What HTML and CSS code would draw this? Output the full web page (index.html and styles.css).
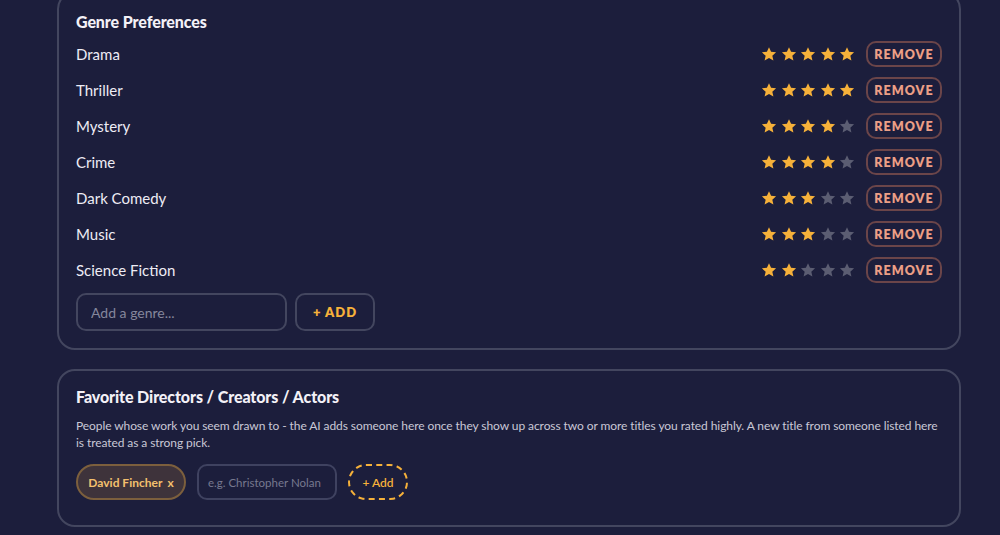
FILE: index.html
```html
<!DOCTYPE html>
<html lang="en">
<head>
<meta charset="utf-8">
<title>Preferences</title>
<link rel="stylesheet" href="styles.css">
</head>
<body>
<svg width="0" height="0" class="defs">
  <defs>
    <symbol id="star" viewBox="0 0 24 24">
      <path d="M12 1.8l3.1 6.9 7.5.8-5.6 5 1.6 7.4L12 18.1l-6.6 3.8L7 14.5l-5.6-5 7.5-.8z"/>
    </symbol>
  </defs>
</svg>
<main class="page">
  <section class="card genres">
    <h2 class="card-title">Genre Preferences</h2>
    <ul class="genre-list">
      <li class="genre-row"><span class="genre-name">Drama</span><span class="stars"><svg class="star on"><use href="#star"/></svg><svg class="star on"><use href="#star"/></svg><svg class="star on"><use href="#star"/></svg><svg class="star on"><use href="#star"/></svg><svg class="star on"><use href="#star"/></svg></span><button class="remove">REMOVE</button></li>
      <li class="genre-row"><span class="genre-name">Thriller</span><span class="stars"><svg class="star on"><use href="#star"/></svg><svg class="star on"><use href="#star"/></svg><svg class="star on"><use href="#star"/></svg><svg class="star on"><use href="#star"/></svg><svg class="star on"><use href="#star"/></svg></span><button class="remove">REMOVE</button></li>
      <li class="genre-row"><span class="genre-name">Mystery</span><span class="stars"><svg class="star on"><use href="#star"/></svg><svg class="star on"><use href="#star"/></svg><svg class="star on"><use href="#star"/></svg><svg class="star on"><use href="#star"/></svg><svg class="star"><use href="#star"/></svg></span><button class="remove">REMOVE</button></li>
      <li class="genre-row"><span class="genre-name">Crime</span><span class="stars"><svg class="star on"><use href="#star"/></svg><svg class="star on"><use href="#star"/></svg><svg class="star on"><use href="#star"/></svg><svg class="star on"><use href="#star"/></svg><svg class="star"><use href="#star"/></svg></span><button class="remove">REMOVE</button></li>
      <li class="genre-row"><span class="genre-name">Dark Comedy</span><span class="stars"><svg class="star on"><use href="#star"/></svg><svg class="star on"><use href="#star"/></svg><svg class="star on"><use href="#star"/></svg><svg class="star"><use href="#star"/></svg><svg class="star"><use href="#star"/></svg></span><button class="remove">REMOVE</button></li>
      <li class="genre-row"><span class="genre-name">Music</span><span class="stars"><svg class="star on"><use href="#star"/></svg><svg class="star on"><use href="#star"/></svg><svg class="star on"><use href="#star"/></svg><svg class="star"><use href="#star"/></svg><svg class="star"><use href="#star"/></svg></span><button class="remove">REMOVE</button></li>
      <li class="genre-row"><span class="genre-name">Science Fiction</span><span class="stars"><svg class="star on"><use href="#star"/></svg><svg class="star on"><use href="#star"/></svg><svg class="star"><use href="#star"/></svg><svg class="star"><use href="#star"/></svg><svg class="star"><use href="#star"/></svg></span><button class="remove">REMOVE</button></li>
    </ul>
    <div class="add-row">
      <input class="genre-input" type="text" placeholder="Add a genre...">
      <button class="add-btn">+ ADD</button>
    </div>
  </section>

  <section class="card people">
    <h2 class="card-title">Favorite Directors / Creators / Actors</h2>
    <p class="desc">People whose work you seem drawn to - the AI adds someone here once they show up across two or more titles you rated highly. A new title from someone listed here is treated as a strong pick.</p>
    <div class="chip-row">
      <span class="chip">David Fincher <span class="chip-x">x</span></span>
      <input class="person-input" type="text" placeholder="e.g. Christopher Nolan">
      <button class="dash-add">+ Add</button>
    </div>
  </section>
</main>
</body>
</html>
```

FILE: styles.css
```css
* { box-sizing: border-box; }

html, body {
  margin: 0;
  padding: 0;
  background: #1c1e3c;
  overflow: hidden;
}

body {
  font-family: Lato, "Noto Sans", sans-serif;
  color: #eceaf4;
}

.defs {
  position: absolute;
  width: 0;
  height: 0;
}

.page {
  width: 904px;
  margin: -9px 0 0 57px;
  display: flex;
  flex-direction: column;
  gap: 19px;
}

.card {
  border: 2px solid #43465f;
  border-radius: 18px;
  padding: 19px 17px 17px 17px;
}

.card-title {
  margin: 0;
  font-family: Lato, sans-serif;
  font-weight: 900;
  font-size: 16px;
  line-height: 20px;
  color: #f3f1f7;
  letter-spacing: -0.1px;
}

.genre-list {
  list-style: none;
  margin: 9px 0 0 0;
  padding: 0;
  display: flex;
  flex-direction: column;
  gap: 10px;
}

.genre-row {
  display: flex;
  align-items: center;
  height: 26px;
}

.genre-name {
  flex: 1;
  font-size: 15px;
  color: #eeecf5;
}

.stars {
  display: flex;
  gap: 3.5px;
  margin-right: 11px;
}

.star {
  width: 16px;
  height: 16px;
  fill: #5b5d72;
}

.star.on {
  fill: #f6b13a;
}

.remove {
  width: 76px;
  height: 26px;
  border: 2px solid #6b4549;
  border-radius: 10px;
  background: transparent;
  color: #ec9f86;
  font-family: Lato, sans-serif;
  font-weight: 800;
  font-size: 12.5px;
  letter-spacing: 1px;
  padding: 0;
}

.add-row {
  display: flex;
  gap: 8px;
  margin-top: 10px;
}

.genre-input {
  width: 211px;
  height: 38px;
  border: 2px solid #43465f;
  border-radius: 10px;
  background: transparent;
  padding: 0 13px;
  font-family: Lato, sans-serif;
  font-size: 14px;
  color: #eceaf4;
}

.genre-input::placeholder { color: #85879c; }

.add-btn {
  width: 80px;
  height: 38px;
  border: 2px solid #43465f;
  border-radius: 10px;
  background: transparent;
  color: #f6b13a;
  font-family: Lato, sans-serif;
  font-weight: 800;
  font-size: 13px;
  letter-spacing: 1px;
  padding: 0;
}

.people {
  padding-top: 16px;
  padding-bottom: 25px;
}

.desc {
  margin: 10px 0 0 0;
  font-size: 12px;
  line-height: 17px;
  letter-spacing: -0.08px;
  color: #c9c8d6;
}

.chip-row {
  display: flex;
  align-items: center;
  margin-top: 13px;
}

.chip {
  height: 36px;
  width: 110px;
  border: 2px solid #7c5f3d;
  background: #3e333b;
  border-radius: 18px;
  display: inline-flex;
  align-items: center;
  justify-content: center;
  color: #f3c06e;
  font-size: 12px;
  font-weight: 700;
  margin-right: 11px;
}

.chip-x {
  margin-left: 5px;
}

.person-input {
  width: 140px;
  height: 36px;
  border: 2px solid #3f4260;
  border-radius: 10px;
  background: transparent;
  padding: 0 9px;
  font-family: Lato, sans-serif;
  font-size: 11.5px;
  color: #eceaf4;
  margin-right: 11px;
}

.person-input::placeholder { color: #77798f; }

.dash-add {
  width: 60px;
  height: 36px;
  border: 2px dashed #f6b13a;
  border-radius: 18px;
  background: transparent;
  color: #f6b13a;
  font-family: Lato, sans-serif;
  font-size: 12px;
  font-weight: 600;
  padding: 0;
}
```
